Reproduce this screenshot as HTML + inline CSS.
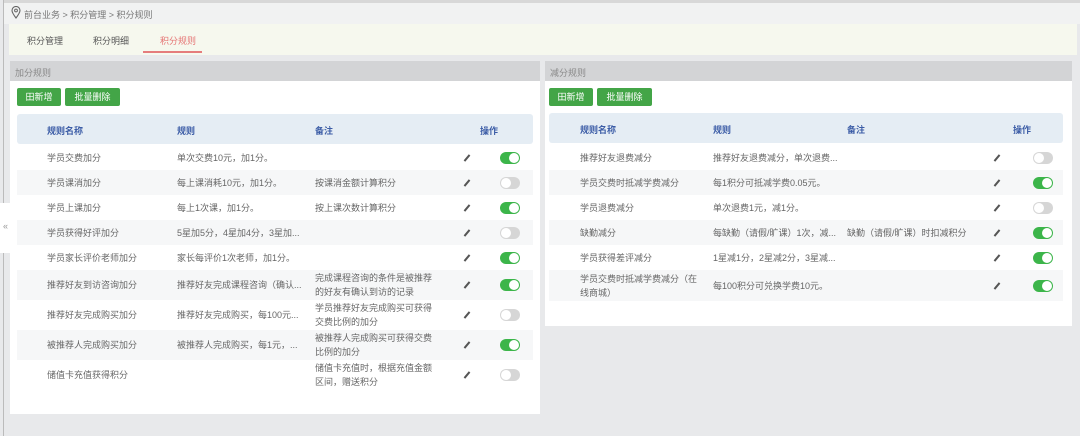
<!DOCTYPE html>
<html><head><meta charset="utf-8"><style>
*{margin:0;padding:0;box-sizing:border-box}
body{width:1080px;height:436px;background:#e8e9eb;font-family:"Liberation Sans","Noto Sans CJK SC",sans-serif;font-size:9px;color:#666;position:relative;overflow:hidden}
.a{position:absolute;white-space:nowrap}
.panel{position:absolute;background:#fff}
.ph{position:absolute;left:0;right:0;top:0;height:20px;background:#d3d4d6;color:#888;padding:5px 5px;font-size:9px}
.btn{position:absolute;height:18px;background:#43a547;color:#fff;border-radius:2px;font-size:9px;line-height:18px;text-align:center}
.th{position:absolute;height:30px;background:#e5edf4;border-radius:3px}
.th span{position:absolute;top:10px;color:#3b5ca6;font-weight:bold;font-size:9px}
.row{position:absolute;}
.row.g{background:#f6f7f8}
.row span{position:absolute;color:#666;font-size:9px;line-height:14px}
.pen{position:absolute;width:2px;height:8px;background:#555;transform:rotate(40deg)}
.tg{position:absolute;width:20px;height:12px;border-radius:6px;background:#d6d6d6}
.tg.on{background:#3cb54a}
.tg::after{content:"";position:absolute;top:1px;width:10px;height:10px;border-radius:5px;background:#fff;left:1px}
.tg.on::after{left:9px}
</style></head><body>
<div class="a" style="left:3px;top:0;width:1px;height:436px;background:#bbb"></div>
<div class="a" style="left:4px;top:0;width:1076px;height:3px;background:#d8d8d8"></div>
<div class="a" style="left:4px;top:3px;width:1076px;height:21px;background:#f1f2f2"></div>
<svg class="a" style="left:11px;top:6px" width="10" height="13" viewBox="0 0 10 13"><path d="M5 12C2 8 1 6 1 4.5a4 4 0 0 1 8 0C9 6 8 8 5 12z" fill="none" stroke="#666" stroke-width="1.1"/><circle cx="5" cy="4.5" r="1.4" fill="none" stroke="#666"/></svg>
<div class="a" style="left:24px;top:8px;color:#777">前台业务 &gt; 积分管理 &gt; 积分规则</div>
<div class="a" style="left:9px;top:24px;width:1068px;height:31px;background:#f6f8ee"></div>
<div class="a" style="left:27px;top:34px;color:#555">积分管理</div>
<div class="a" style="left:93px;top:34px;color:#555">积分明细</div>
<div class="a" style="left:160px;top:34px;color:#e57373">积分规则</div>
<div class="a" style="left:143px;top:51px;width:59px;height:2px;background:#e57c7c"></div>
<div class="a" style="left:0;top:203px;width:11px;height:50px;background:#fff;color:#999;font-size:9px;padding-top:18px;text-align:center">«</div>

<div class="panel" style="left:10px;top:61px;width:530px;height:353px">
<div class="ph">加分规则</div>
<div class="btn" style="left:7px;top:27px;width:44px">田新增</div>
<div class="btn" style="left:55px;top:27px;width:55px">批量删除</div>
<div class="th" style="left:7px;top:53px;width:516px"><span style="left:30px">规则名称</span><span style="left:160px">规则</span><span style="left:298px">备注</span><span style="left:463px">操作</span></div>
</div>
<div class="panel" style="left:545px;top:61px;width:527px;height:265px">
<div class="ph">减分规则</div>
<div class="btn" style="left:4px;top:27px;width:44px">田新增</div>
<div class="btn" style="left:52px;top:27px;width:55px">批量删除</div>
<div class="th" style="left:4px;top:52px;width:514px"><span style="left:31px">规则名称</span><span style="left:164px">规则</span><span style="left:298px">备注</span><span style="left:464px">操作</span></div>
</div>

<div id="L"></div>
<script>
function rows(x,w,cols,pen,tg,data){let h='';data.forEach((d,i)=>{const [top,ht,a,b,c,on]=d;h+=`<div class="row${i%2?' g':''}" style="left:${x}px;top:${top}px;width:${w}px;height:${ht}px">`;
[a,b,c].forEach((t,j)=>{if(t){const lines=t.split('|').length;h+=`<span style="left:${cols[j]}px;top:${(ht-lines*14)/2}px">${t.replace(/\|/g,'<br>')}</span>`}});
h+=`<div class="pen" style="left:${pen}px;top:${ht/2-4}px"></div><div class="tg${on?' on':''}" style="left:${tg}px;top:${ht/2-6}px"></div></div>`});return h}
document.getElementById('L').innerHTML=rows(17,516,[30,160,298],449,483,[
[145,25,'学员交费加分','单次交费10元，加1分。','',1],
[170,25,'学员课消加分','每上课消耗10元，加1分。','按课消金额计算积分',0],
[195,25,'学员上课加分','每上1次课，加1分。','按上课次数计算积分',1],
[220,25,'学员获得好评加分','5星加5分，4星加4分，3星加...','',0],
[245,25,'学员家长评价老师加分','家长每评价1次老师，加1分。','',1],
[270,30,'推荐好友到访咨询加分','推荐好友完成课程咨询（确认...','完成课程咨询的条件是被推荐|的好友有确认到访的记录',1],
[300,30,'推荐好友完成购买加分','推荐好友完成购买，每100元...','学员推荐好友完成购买可获得|交费比例的加分',0],
[330,30,'被推荐人完成购买加分','被推荐人完成购买，每1元，...','被推荐人完成购买可获得交费|比例的加分',1],
[360,30,'储值卡充值获得积分','','储值卡充值时，根据充值金额|区间，赠送积分',0]
])+rows(549,514,[31,164,298],447,484,[
[145,25,'推荐好友退费减分','推荐好友退费减分，单次退费...','',0],
[170,25,'学员交费时抵减学费减分','每1积分可抵减学费0.05元。','',1],
[195,25,'学员退费减分','单次退费1元，减1分。','',0],
[220,25,'缺勤减分','每缺勤（请假/旷课）1次，减...','缺勤（请假/旷课）时扣减积分',1],
[245,25,'学员获得差评减分','1星减1分，2星减2分，3星减...','',1],
[270,31,'学员交费时抵减学费减分（在|线商城）','每100积分可兑换学费10元。','',1]
]);
</script>
</body></html>
